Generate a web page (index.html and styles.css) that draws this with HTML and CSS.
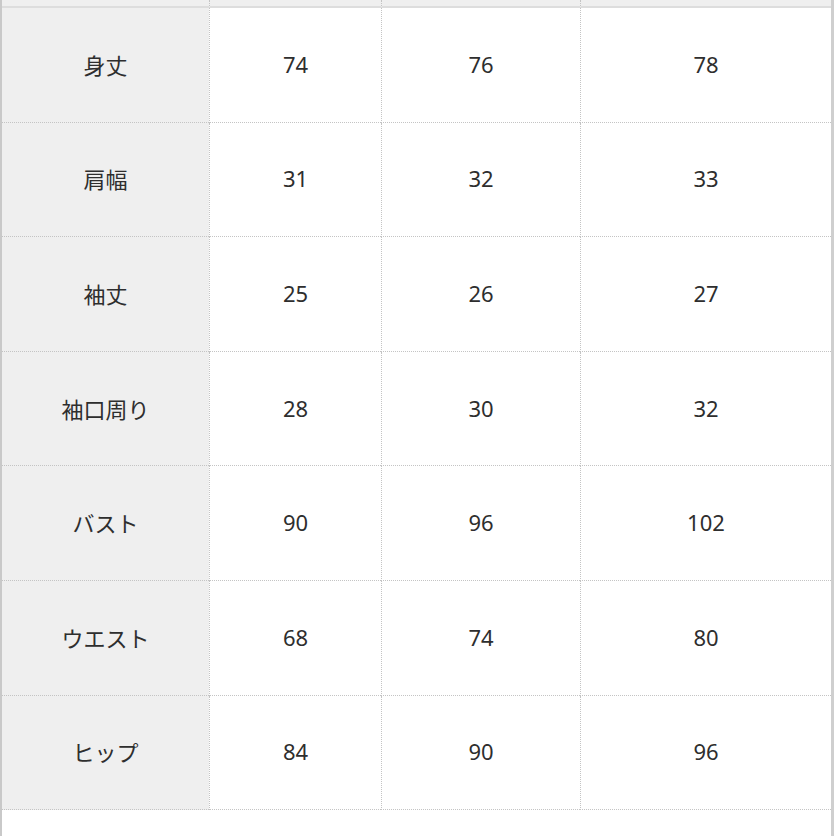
FILE: index.html
```html
<!DOCTYPE html>
<html lang="ja">
<head>
<meta charset="utf-8">
<title>サイズ表</title>
<link rel="stylesheet" href="styles.css">
</head>
<body>
<div class="frame">
  <div class="size-table">
    <div class="band label"></div><div class="band"></div><div class="band"></div><div class="band"></div>

    <div class="cell label">身丈</div><div class="cell">74</div><div class="cell">76</div><div class="cell">78</div>
    <div class="cell label">肩幅</div><div class="cell">31</div><div class="cell">32</div><div class="cell">33</div>
    <div class="cell label">袖丈</div><div class="cell">25</div><div class="cell">26</div><div class="cell">27</div>
    <div class="cell label">袖口周り</div><div class="cell">28</div><div class="cell">30</div><div class="cell">32</div>
    <div class="cell label">バスト</div><div class="cell">90</div><div class="cell">96</div><div class="cell">102</div>
    <div class="cell label">ウエスト</div><div class="cell">68</div><div class="cell">74</div><div class="cell">80</div>
    <div class="cell label">ヒップ</div><div class="cell">84</div><div class="cell">90</div><div class="cell">96</div>
  </div>
</div>
</body>
</html>
```

FILE: styles.css
```css
html, body {
  margin: 0;
  padding: 0;
  background: #ffffff;
}

.frame {
  width: 829px;
  height: 836px;
  border-left: 2px solid #c9c9c9;
  border-right: 3px solid #cfcfcf;
  box-sizing: content-box;
  background: #ffffff;
}

.size-table {
  display: grid;
  grid-template-columns: 207px 172px 199px 1fr;
  grid-template-rows: 8px repeat(7, 114.6px);
  font-family: "Noto Sans", "Noto Sans CJK JP", sans-serif;
  font-size: 22px;
  color: #2e2e2e;
}

.band {
  background: #efefef;
  border-bottom: 2px solid #dddddd;
  box-sizing: border-box;
}

.band + .band {
  border-left: 1px dotted #c4c4c4;
}

.cell {
  display: flex;
  align-items: center;
  justify-content: center;
  padding-bottom: 2px;
  border-bottom: 1px dotted #c4c4c4;
  border-left: 1px dotted #c4c4c4;
  box-sizing: border-box;
  background: #ffffff;
}

.cell.label {
  border-left: none;
  background: #efefef;
}

.band.label {
  border-left: none;
}
```
